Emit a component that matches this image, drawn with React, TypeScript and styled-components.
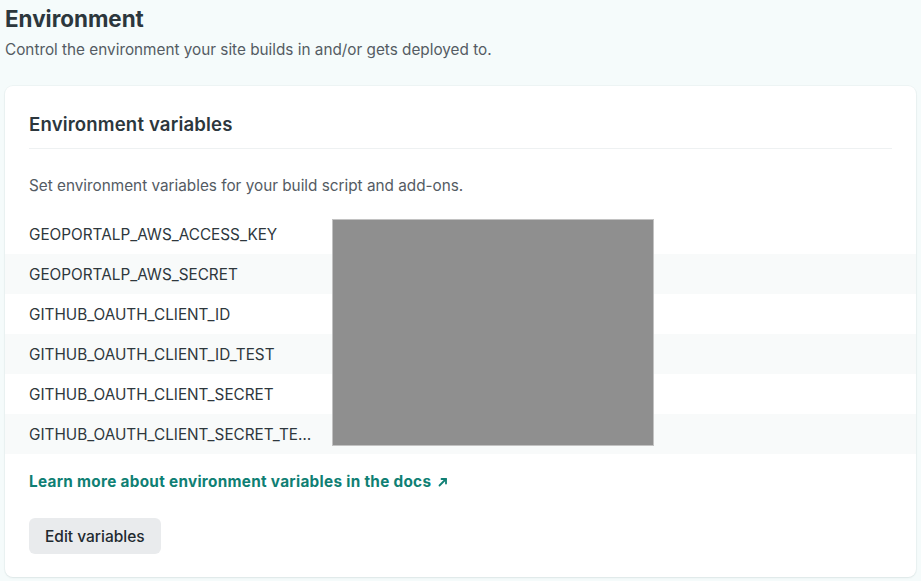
import React from "react";
import styled, { createGlobalStyle } from "styled-components";

const Global = createGlobalStyle`
  html, body { margin: 0; padding: 0; background: #f5fbfb; }
  body { font-family: Inter, "Open Sans", "Liberation Sans", sans-serif; color: #2e373d; -webkit-font-smoothing: antialiased; }
  * { box-sizing: border-box; }
`;

const Page = styled.div`
  padding: 4px 5px 4px 5px;
  width: 921px;
`;

const Title = styled.h1`
  margin: 0;
  font-size: 22.4px;
  line-height: 30px;
  font-weight: 700;
  color: #2c373d;
`;

const Subtitle = styled.p`
  margin: 6px 0 0;
  font-size: 15.3px;
  line-height: 20px;
  color: #545b63;
`;

const Card = styled.section`
  margin-top: 26px;
  width: 911px;
  background: #fff;
  border-radius: 8px;
  box-shadow: 0 1px 2px rgba(30, 60, 60, 0.08), 0 0 0 1px rgba(30, 60, 60, 0.03);
  padding: 24px 0 23px;
`;

const Inner = styled.div`
  padding: 0 24px;
`;

const CardTitle = styled.h2`
  margin: 0;
  font-size: 18.6px;
  letter-spacing: 0.15px;
  line-height: 28px;
  font-weight: 600;
  color: #2c373d;
  padding-bottom: 10px;
  border-bottom: 1px solid #eef1f2;
`;

const Desc = styled.p`
  margin: 27px 0 18px;
  font-size: 15.3px;
  line-height: 20px;
  color: #545b63;
`;

const List = styled.div`
  position: relative;
`;

const Row = styled.div<{ $striped: boolean }>`
  height: 40px;
  display: flex;
  align-items: center;
  padding: 0 24px;
  background: ${(p) => (p.$striped ? "#f8fafa" : "#fff")};
`;

const Name = styled.span`
  width: 283px;
  font-size: 15.3px;
  color: #2e373d;
  white-space: nowrap;
  overflow: hidden;
  text-overflow: ellipsis;
`;

const Redaction = styled.div`
  position: absolute;
  left: 327px;
  top: 5px;
  width: 322px;
  height: 227px;
  background: #8f8f8f;
  border: 1px solid #c2c2c2;
`;

const Link = styled.a`
  display: inline-flex;
  align-items: center;
  gap: 7px;
  margin-top: 18px;
  font-size: 15.3px;
  letter-spacing: 0.3px;
  line-height: 20px;
  font-weight: 700;
  color: #0f7f74;
  text-decoration: none;
`;

const Actions = styled.div`
  margin-top: 26px;
`;

const Button = styled.button`
  height: 36px;
  padding: 0 16px;
  border: none;
  border-radius: 6px;
  background: #e9ebed;
  font-family: inherit;
  font-size: 15.5px;
  font-weight: 500;
  color: #1f2a30;
`;

const names = [
  "GEOPORTALP_AWS_ACCESS_KEY",
  "GEOPORTALP_AWS_SECRET",
  "GITHUB_OAUTH_CLIENT_ID",
  "GITHUB_OAUTH_CLIENT_ID_TEST",
  "GITHUB_OAUTH_CLIENT_SECRET",
  "GITHUB_OAUTH_CLIENT_SECRET_TEST",
];

export default function App() {
  return (
    <Page>
      <Global />
      <Title>Environment</Title>
      <Subtitle>Control the environment your site builds in and/or gets deployed to.</Subtitle>
      <Card>
        <Inner>
          <CardTitle>Environment variables</CardTitle>
          <Desc>Set environment variables for your build script and add-ons.</Desc>
        </Inner>
        <List>
          {names.map((n, i) => (
            <Row key={n} $striped={i % 2 === 1}>
              <Name>{n}</Name>
            </Row>
          ))}
          <Redaction />
        </List>
        <Inner>
          <Link href="#">
            Learn more about environment variables in the docs
            <svg width="10" height="10" viewBox="0 0 10 10" fill="none" stroke="currentColor" strokeWidth="1.8" strokeLinecap="round" strokeLinejoin="round">
              <path d="M1.5 8.5 L8 2" />
              <path d="M3.5 2 H8 V6.5" />
            </svg>
          </Link>
          <Actions>
            <Button>Edit variables</Button>
          </Actions>
        </Inner>
      </Card>
    </Page>
  );
}
